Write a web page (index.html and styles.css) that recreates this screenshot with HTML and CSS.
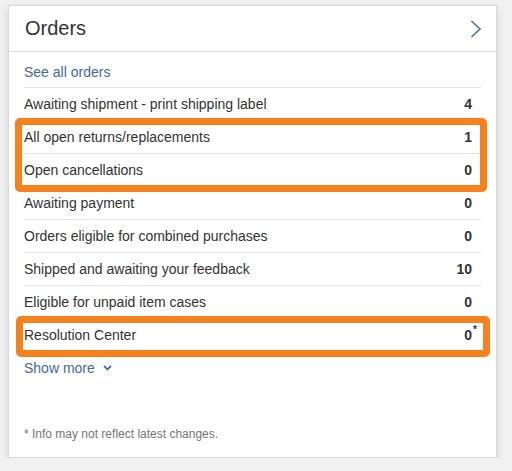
FILE: index.html
```html
<!DOCTYPE html>
<html lang="en">
<head>
    <meta charset="UTF-8">
    <meta name="viewport" content="width=device-width, initial-scale=1.0">
    <title>Orders</title>
    <link rel="stylesheet" href="styles.css">
</head>
<body>
    <div class="card">
        <div class="card-header">
            <h2>Orders</h2>
            <a href="#" class="header-link" aria-label="Go to orders">
                <svg width="12" height="18" viewBox="0 0 12 18">
                    <polyline points="1.5,1 10,9 1.5,17" fill="none" stroke="#4a72ad" stroke-width="1.6"/>
                </svg>
            </a>
        </div>
        <div class="card-body">
            <a href="#" class="see-all">See all orders</a>

            <!-- Order status rows -->
            <div class="row">
                <span>Awaiting shipment - print shipping label</span>
                <span class="count">4</span>
            </div>
            <div class="highlight highlight-top">
                <div class="row">
                    <span>All open returns/replacements</span>
                    <span class="count">1</span>
                </div>
                <div class="row">
                    <span>Open cancellations</span>
                    <span class="count">0</span>
                </div>
            </div>
            <div class="row">
                <span>Awaiting payment</span>
                <span class="count">0</span>
            </div>
            <div class="row">
                <span>Orders eligible for combined purchases</span>
                <span class="count">0</span>
            </div>
            <div class="row">
                <span>Shipped and awaiting your feedback</span>
                <span class="count">10</span>
            </div>
            <div class="row">
                <span>Eligible for unpaid item cases</span>
                <span class="count">0</span>
            </div>
            <div class="highlight highlight-bottom">
                <div class="row">
                    <span>Resolution Center</span>
                    <span class="count">0<span class="star">*</span></span>
                </div>
            </div>

            <a href="#" class="show-more">
                Show more
                <svg width="9" height="6" viewBox="0 0 9 6">
                    <polyline points="1,1 4.5,4.5 8,1" fill="none" stroke="#4a72ad" stroke-width="1.8"/>
                </svg>
            </a>

            <p class="footnote">* Info may not reflect latest changes.</p>
        </div>
    </div>
</body>
</html>
```

FILE: styles.css
```css
body {
    font-family: "Liberation Sans", Arial, sans-serif;
    margin: 0;
    padding: 0;
    background-color: #f1f1f1;
}
.card {
    width: 487px;
    margin: 5px 0 0 8px;
    background-color: #fff;
    border: 1px solid #d8d8d8;
    box-shadow: 0 3px 8px rgba(0, 0, 0, 0.12);
}
.card-header {
    height: 45px;
    padding: 0 16px;
    display: flex;
    justify-content: space-between;
    align-items: center;
    border-bottom: 1px solid #dcdcdc;
}
.card-header h2 {
    margin: 0;
    font-size: 20px;
    font-weight: normal;
    color: #333;
}
.header-link {
    display: flex;
    margin-right: -2px;
}
.card-body {
    padding: 0 15px 15px 15px;
}
.see-all {
    display: block;
    padding: 10px 0 5px 0;
    line-height: 20px;
    font-size: 14px;
    color: #4169a8;
    text-decoration: none;
}
.row {
    display: flex;
    justify-content: space-between;
    align-items: center;
    height: 32px;
    border-top: 1px solid #e6e6e6;
    font-size: 14px;
    color: #333;
}
.count {
    font-weight: bold;
    padding-right: 9px;
    position: relative;
}
.star {
    position: absolute;
    left: 100%;
    margin-left: -8px;
    top: -3px;
    font-size: 10px;
}
/* orange marker boxes drawn over the rows */
.highlight {
    outline: 7px solid #f6811d;
    outline-offset: -5px;
    border-radius: 3px;
}
.highlight-top {
    margin: 0 -4px -4px -7px;
    padding: 0 4px 4px 7px;
}
.highlight-bottom {
    margin: 0 -7px -4px -6px;
    padding: 0 7px 4px 6px;
}
.show-more {
    display: flex;
    align-items: center;
    gap: 8px;
    padding-top: 7px;
    line-height: 20px;
    font-size: 14px;
    color: #4169a8;
    text-decoration: none;
}
.footnote {
    margin: 48px 0 0 0;
    line-height: 16px;
    font-size: 12px;
    color: #777;
}
```
